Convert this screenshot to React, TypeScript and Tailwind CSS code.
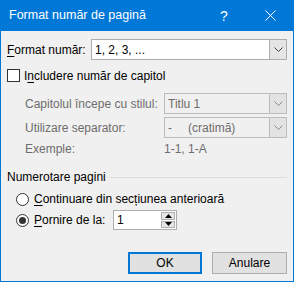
import React from 'react'

const font = { fontFamily: '"Liberation Sans", Arial, sans-serif' }

const Chevron = ({ color }: { color: string }) => (
  <svg width="9" height="5" viewBox="0 0 9 5">
    <path d="M0.5 0.5 L4.5 4.5 L8.5 0.5" fill="none" stroke={color} strokeWidth="1" />
  </svg>
)

const Combo = ({ value, width, disabled }: { value: React.ReactNode; width: string; disabled?: boolean }) => (
  <div
    className={`flex h-[21px] ${width} border ${disabled ? 'border-[#bcbcbc] bg-[#f0f0f0] text-[#6d6d6d]' : 'border-[#adadad] bg-white text-black'}`}
  >
    <div className="flex flex-1 items-center pl-[3px]">{value}</div>
    <div
      className={`flex w-[17px] items-center justify-center border-l ${disabled ? 'border-[#bcbcbc] bg-[#e3e3e3]' : 'border-[#adadad] bg-[#e5e5e5]'}`}
    >
      <Chevron color={disabled ? '#8a8a8a' : '#404040'} />
    </div>
  </div>
)

const Radio = ({ checked }: { checked?: boolean }) => (
  <div className="flex h-[13px] w-[13px] items-center justify-center rounded-full border border-[#333] bg-white">
    {checked && <div className="h-[7px] w-[7px] rounded-full bg-[#333]" />}
  </div>
)

export default function App() {
  return (
    <div className="h-[282px] w-[294px] bg-[#f0f0f0] text-[12px] leading-none text-black" style={font}>
      {/* Title bar */}
      <div className="flex h-[31px] items-center bg-[#0078d7] text-white">
        <span className="flex-1 pl-[9px] text-[12.5px]">Format număr de pagină</span>
        <div className="flex w-[44px] justify-center text-[14px]">?</div>
        <div className="flex w-[48px] justify-center">
          <svg width="11" height="11" viewBox="0 0 11 11">
            <path d="M0.5 0.5 L10.5 10.5 M10.5 0.5 L0.5 10.5" stroke="white" strokeWidth="1" />
          </svg>
        </div>
      </div>

      {/* Body */}
      <div className="h-[251px] border border-t-0 border-[#0078d7] px-[6px] pt-[8px]">
        <div className="flex h-[21px] items-center">
          <span className="w-[84px]">
            <span className="underline underline-offset-2">F</span>ormat număr:
          </span>
          <Combo value="1, 2, 3, ..." width="w-[196px]" />
        </div>

        <div className="mt-[9px] flex h-[13px] items-center">
          <div className="h-[13px] w-[13px] border border-[#333] bg-white" />
          <span className="ml-[4px]">
            I<span className="underline underline-offset-2">n</span>cludere număr de capitol
          </span>
        </div>

        <div className="ml-[18px] text-[#6d6d6d]">
          <div className="mt-[11px] flex h-[21px] items-center">
            <span className="w-[139px]">Capitolul începe cu stilul:</span>
            <Combo value="Titlu 1" width="w-[123px]" disabled />
          </div>
          <div className="mt-[3px] flex h-[21px] items-center">
            <span className="w-[139px]">Utilizare separator:</span>
            <Combo
              value={
                <span className="flex">
                  <span className="w-[20px]">-</span>(cratimă)
                </span>
              }
              width="w-[123px]"
              disabled
            />
          </div>
          <div className="mt-[3px] flex h-[16px] items-center">
            <span className="w-[139px]">Exemple:</span>
            <span>1-1, 1-A</span>
          </div>
        </div>

        <div className="mt-[12px] flex h-[16px] items-center">
          <span>Numerotare pagini</span>
          <div className="ml-[4px] h-px flex-1 bg-[#dcdcdc]" />
        </div>

        <div className="ml-[9px]">
          <div className="mt-[6px] flex h-[16px] items-center">
            <Radio />
            <span className="ml-[5px]">
              <span className="underline underline-offset-2">C</span>ontinuare din secțiunea anterioară
            </span>
          </div>
          <div className="mt-[3px] flex h-[20px] items-center">
            <Radio checked />
            <span className="ml-[5px] w-[79px]">
              <span className="underline underline-offset-2">P</span>ornire de la:
            </span>
            <div className="flex h-[20px] w-[64px] border border-[#adadad] bg-white">
              <div className="flex flex-1 items-center pl-[3px]">1</div>
              <div className="flex w-[15px] flex-col gap-px p-px pl-0">
                <div className="flex flex-1 items-center justify-center border border-[#adadad] bg-[#e5e5e5]">
                  <svg width="7" height="4" viewBox="0 0 7 4">
                    <path d="M0 4 L3.5 0 L7 4 Z" fill="#000" />
                  </svg>
                </div>
                <div className="flex flex-1 items-center justify-center border border-[#adadad] bg-[#e5e5e5]">
                  <svg width="7" height="4" viewBox="0 0 7 4">
                    <path d="M0 0 L3.5 4 L7 0 Z" fill="#000" />
                  </svg>
                </div>
              </div>
            </div>
          </div>
        </div>

        <div className="mt-[22px] flex justify-end gap-[10px]">
          <button className="flex h-[22px] w-[74px] items-center justify-center border-2 border-[#0078d7] bg-[#e1e1e1]">
            OK
          </button>
          <button className="flex h-[22px] w-[75px] items-center justify-center border border-[#adadad] bg-[#e1e1e1]">
            Anulare
          </button>
        </div>
      </div>
    </div>
  )
}
